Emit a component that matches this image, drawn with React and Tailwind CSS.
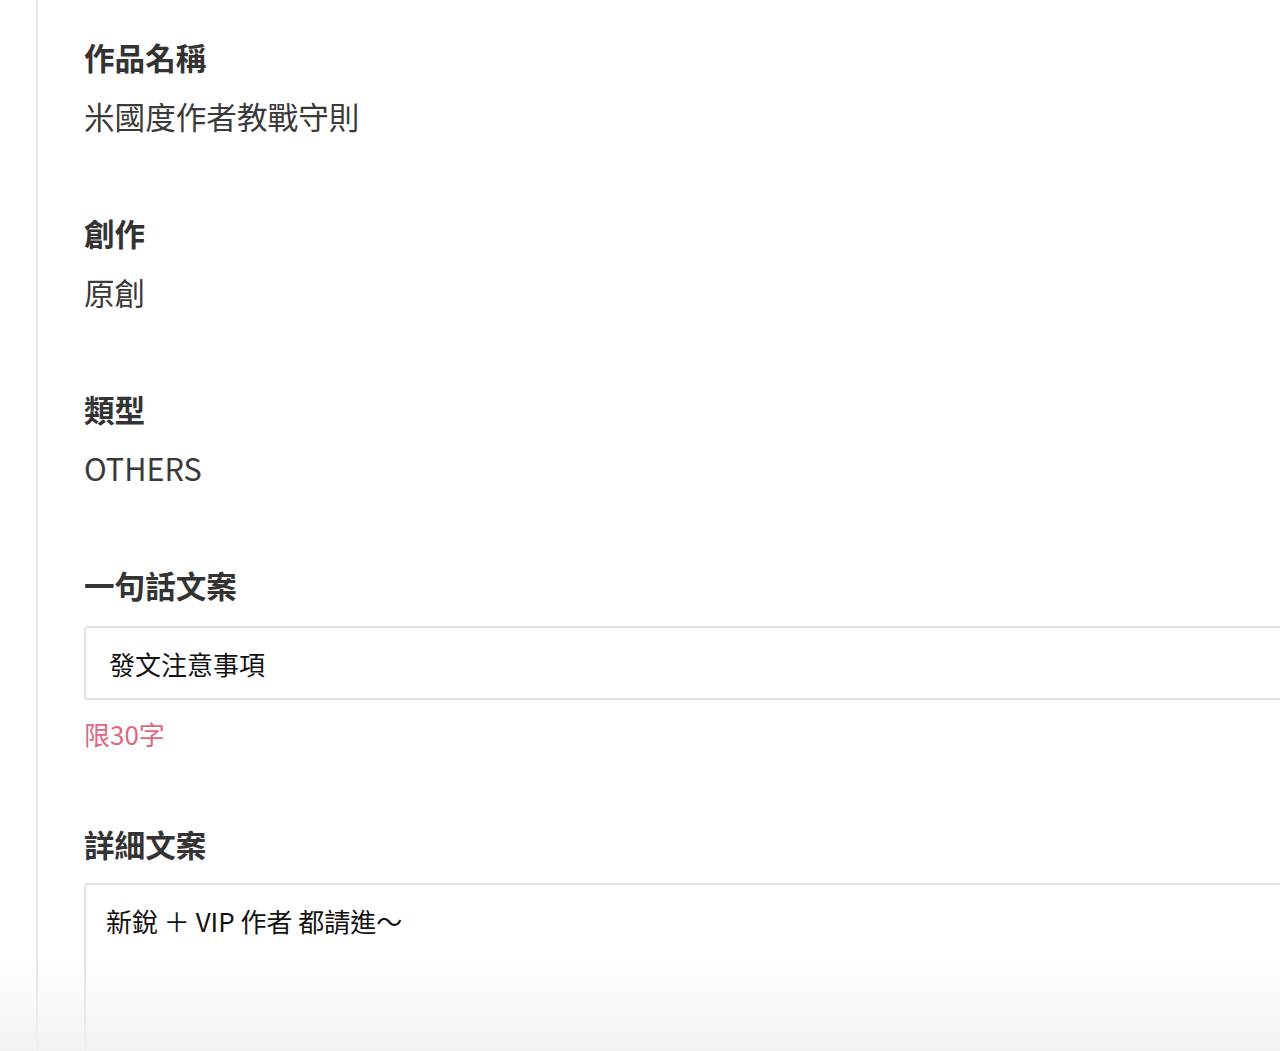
export default function App() {
  const font = { fontFamily: '"Noto Sans CJK TC", "Noto Sans", sans-serif' };
  return (
    <div className="relative h-[1051px] w-[1280px] overflow-hidden bg-white" style={font}>
      <div className="ml-[36px] h-full border-l-2 border-[#e6e6e6] pl-[46px] pt-[37px]">
        <div className="flex flex-col">
          <div className="text-[30.6px] font-bold leading-[40px] text-[#333]">作品名稱</div>
          <div className="mt-[19px] text-[30.6px] leading-[40px] text-[#3a3a3a]">米國度作者教戰守則</div>

          <div className="mt-[77px] text-[30.6px] font-bold leading-[40px] text-[#333]">創作</div>
          <div className="mt-[19px] text-[30.6px] leading-[40px] text-[#3a3a3a]">原創</div>

          <div className="mt-[77px] text-[30.6px] font-bold leading-[40px] text-[#333]">類型</div>
          <div className="mt-[19px] text-[30.6px] leading-[40px] text-[#3a3a3a]">OTHERS</div>

          <div className="mt-[77px] text-[30.6px] font-bold leading-[40px] text-[#333]">一句話文案</div>
          <div className="mt-[21px] flex h-[74px] w-[1300px] items-center rounded-[4px] border-2 border-[#e3e3e3] pl-[23px] text-[26px] text-[#111]">
            發文注意事項
          </div>
          <div className="mt-[16px] text-[26px] leading-[36px] text-[#e0677f]">限30字</div>

          <div className="mt-[72px] text-[30.6px] font-bold leading-[40px] text-[#333]">詳細文案</div>
          <div className="mt-[19px] h-[300px] w-[1300px] rounded-[4px] border-2 border-[#e3e3e3] pl-[20px] pt-[18px] text-[26px] leading-[36px] text-[#111]">
            新銳 ＋ VIP 作者 都請進～
          </div>
        </div>
      </div>
      <div className="pointer-events-none absolute bottom-0 left-0 h-[90px] w-full bg-gradient-to-b from-[rgba(240,240,240,0)] to-[rgba(240,240,240,0.9)]" />
    </div>
  );
}
